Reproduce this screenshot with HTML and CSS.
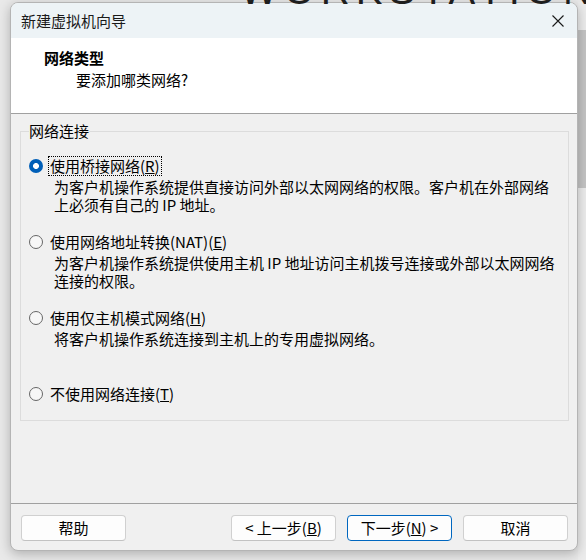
FILE: index.html
```html
<!DOCTYPE html>
<html lang="zh-CN">
<head>
    <meta charset="UTF-8">
    <title>新建虚拟机向导</title>
    <link rel="stylesheet" href="styles.css">
</head>
<body>
    <div class="desktop">
        <div class="brand"><span>WORKSTATION PRO</span></div>

        <div class="window">
            <div class="titlebar">
                <span class="title">新建虚拟机向导</span>
                <svg class="close" width="12" height="12" viewBox="0 0 12 12">
                    <path d="M0.5 0.5 L11.5 11.5 M11.5 0.5 L0.5 11.5" stroke="#1a1a1a" stroke-width="1.1" fill="none"/>
                </svg>
            </div>

            <div class="header">
                <div class="header-title">网络类型</div>
                <div class="header-sub">要添加哪类网络?</div>
            </div>

            <div class="content">
                <fieldset class="group">
                    <legend>网络连接</legend>

                    <div class="option">
                        <div class="option-row">
                            <span class="radio checked"></span>
                            <span class="label focused">使用桥接网络(<u>R</u>)</span>
                        </div>
                        <p class="desc">为客户机操作系统提供直接访问外部以太网网络的权限。客户机在外部网络<br>上必须有自己的 IP 地址。</p>
                    </div>

                    <div class="option">
                        <div class="option-row">
                            <span class="radio"></span>
                            <span class="label">使用网络地址转换(NAT)(<u>E</u>)</span>
                        </div>
                        <p class="desc">为客户机操作系统提供使用主机 IP 地址访问主机拨号连接或外部以太网网络<br>连接的权限。</p>
                    </div>

                    <div class="option">
                        <div class="option-row">
                            <span class="radio"></span>
                            <span class="label">使用仅主机模式网络(<u>H</u>)</span>
                        </div>
                        <p class="desc">将客户机操作系统连接到主机上的专用虚拟网络。</p>
                    </div>

                    <div class="option">
                        <div class="option-row">
                            <span class="radio"></span>
                            <span class="label">不使用网络连接(<u>T</u>)</span>
                        </div>
                    </div>
                </fieldset>
            </div>

            <div class="footer">
                <button class="btn help">帮助</button>
                <button class="btn">&lt; 上一步(<u>B</u>)</button>
                <button class="btn primary">下一步(<u>N</u>) &gt;</button>
                <button class="btn">取消</button>
            </div>
        </div>

        <div class="edge">
            <div class="edge-bar"></div>
        </div>
    </div>
</body>
</html>
```

FILE: styles.css
```css
* {
    box-sizing: border-box;
}
body {
    margin: 0;
    font-family: "Noto Sans CJK SC", "Liberation Sans", sans-serif;
    font-size: 15px;
    color: #000;
    background: #e8e8e8;
}
.desktop {
    position: relative;
    width: 586px;
    height: 560px;
    display: flex;
    padding: 2px 0 0 10px;
    overflow: hidden;
    background: #e9e9e9;
}
.brand {
    position: absolute;
    top: 0;
    left: 240px;
    height: 5px;
    overflow: hidden;
    z-index: 2;
}
.brand span {
    display: block;
    margin-top: -30px;
    font-family: "Liberation Sans", sans-serif;
    font-size: 40px;
    line-height: 1;
    letter-spacing: 6px;
    color: #1e1e1e;
    white-space: nowrap;
}
.window {
    position: relative;
    z-index: 1;
    width: 568px;
    height: 549px;
    flex-shrink: 0;
    display: flex;
    flex-direction: column;
    background: #f0f0f0;
    border: 1px solid #b4b4b4;
    border-radius: 8px;
    overflow: hidden;
    box-shadow: 0 3px 12px rgba(0, 0, 0, 0.25);
}
.titlebar {
    height: 35px;
    flex-shrink: 0;
    display: flex;
    align-items: center;
    justify-content: space-between;
    padding: 0 13px 0 10px;
    background: #edf3f6;
}
.title {
    line-height: 18px;
    color: #1a1a1a;
}
.header {
    height: 76px;
    flex-shrink: 0;
    padding: 11px 0 0 33px;
    background: #fff;
    border-bottom: 1px solid #a0a0a0;
}
.header-title {
    font-weight: bold;
    line-height: 18px;
}
.header-sub {
    margin: 4px 0 0 32px;
    line-height: 18px;
}
.content {
    flex: 1;
    padding: 8px 8px 0 9px;
}
.group {
    margin: 0;
    padding: 17px 8px 17px 8px;
    border: 1px solid #dcdcdc;
}
.group legend {
    padding: 0;
    line-height: 18px;
}
.option {
    height: 76px;
}
.option:last-child {
    height: auto;
}
.option-row {
    display: flex;
    align-items: center;
    height: 18px;
}
.radio {
    width: 14px;
    height: 14px;
    flex-shrink: 0;
    margin-right: 6px;
    border-radius: 50%;
    border: 1px solid #666;
    background: #f7f7f7;
}
.radio.checked {
    border: none;
    background: radial-gradient(circle, #fff 2.6px, #005fb8 3.3px);
}
.label {
    padding: 0 1px;
    line-height: 18px;
}
.label.focused {
    outline: 1px dotted #000;
}
.desc {
    margin: 3px 0 0 25px;
    line-height: 18px;
    white-space: nowrap;
}
.footer {
    height: 47px;
    flex-shrink: 0;
    display: flex;
    gap: 11px;
    padding: 11px 9px 0 10px;
    border-top: 1px solid #a0a0a0;
}
.btn {
    width: 105px;
    height: 26px;
    padding: 0;
    font-family: inherit;
    font-size: 15px;
    line-height: 18px;
    color: #000;
    background: #fdfdfd;
    border: 1px solid #d0d0d0;
    border-bottom-color: #c2c2c2;
    border-radius: 4px;
}
.btn.help {
    margin-right: auto;
}
.btn.primary {
    border-color: #0067c0;
}
.edge {
    flex: 1;
    padding-top: 28px;
    background: #ececec;
}
.edge-bar {
    height: 158px;
    background: #c4c4c4;
}
```
